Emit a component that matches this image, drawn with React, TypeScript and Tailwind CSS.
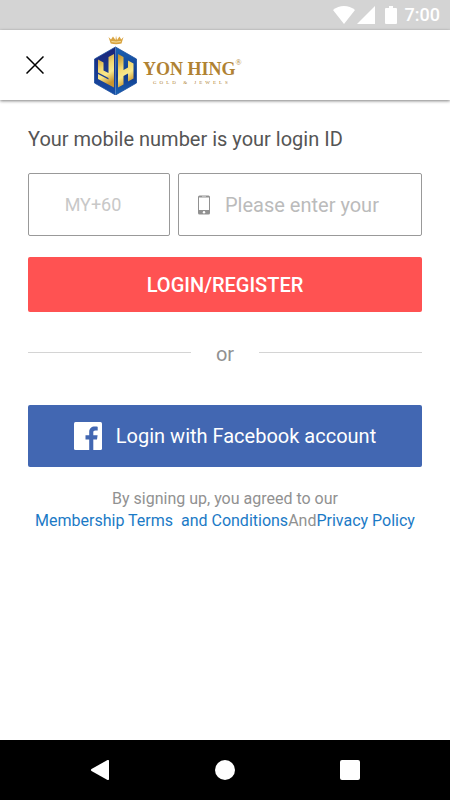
import type { ReactNode } from "react";

function StatusBar() {
  return (
    <div className="flex h-[30px] items-center justify-end bg-[#d4d4d4] pr-2.5 text-white">
      <svg className="h-[18px] w-[22px]" viewBox="0 0 22 18" fill="currentColor" aria-hidden="true">
        <path d="M0 4C6.400-1.300 15.600-1.300 22 4L11 18Z" />
      </svg>
      <svg className="ml-0.5 h-[18px] w-[18px]" viewBox="0 0 18 18" fill="currentColor" aria-hidden="true">
        <path d="M18 0V18H0Z" />
      </svg>
      <svg className="ml-2.5 h-[18px] w-3" viewBox="0 0 12 18" fill="currentColor" aria-hidden="true">
        <path d="M4 0H8V2H11Q12 2 12 3V17Q12 18 11 18H1Q0 18 0 17V3Q0 2 1 2H4Z" />
      </svg>
      <span className="ml-2 text-lg leading-[30px] font-medium">7:00</span>
    </div>
  );
}

function LogoMark() {
  return (
    <svg className="h-[60px] w-[43px]" viewBox="0 0 43 60" aria-hidden="true">
      <defs>
        <linearGradient id="gold" x1="0" y1="0" x2="0.3" y2="1">
          <stop offset="0" stopColor="#b98a2c" />
          <stop offset="0.45" stopColor="#f3d871" />
          <stop offset="0.7" stopColor="#f8e88c" />
          <stop offset="1" stopColor="#c9952f" />
        </linearGradient>
        <linearGradient id="left" x1="0" y1="0" x2="0" y2="1">
          <stop offset="0" stopColor="#1c2478" />
          <stop offset="1" stopColor="#164ea6" />
        </linearGradient>
        <linearGradient id="right" x1="0" y1="0" x2="0" y2="1">
          <stop offset="0" stopColor="#1a63b4" />
          <stop offset="0.6" stopColor="#123a8c" />
          <stop offset="1" stopColor="#1a63b4" />
        </linearGradient>
      </defs>
      <path
        d="M14.500 2L17 4.500L19 1.500L21.500 5L22 0.500L23 5L25.500 1.500L27.200 4.500L29.500 2L27.500 8.500Q22 10 16.700 8.500Z"
        fill="#d9a441"
      />
      <path d="M17.500 6.500Q22 7.600 26.800 6.500" fill="none" stroke="#f5e0a0" strokeWidth="1" />
      <path d="M21.500 12L0.500 24V48L21.500 60Z" fill="url(#left)" />
      <path d="M21.500 12L42.500 24V48L21.500 60Z" fill="url(#right)" />
      <path d="M21.500 12L42.500 24V48L21.500 60L0.500 48V24Z" fill="none" stroke="#1b4c9d" strokeWidth="0.800" />
      <path
        d="M4 24.500L9.500 27.500V35.500L14.500 38V22L20 19V52.500L4 44V39L14.500 44.500V43L4 37.500Z"
        fill="url(#gold)"
      />
      <path d="M24 19L29.500 22V35L34 32.500V25.500L39.500 28.500V43.500L34 46.500V38.500L29.500 41V49.500L24 52.500Z" fill="url(#gold)" />
    </svg>
  );
}

function Header() {
  return (
    <header className="flex h-[70px] items-center bg-white pl-[26px] shadow-[0_1px_3px_rgba(0,0,0,0.5)]">
      <button type="button" aria-label="Close" className="text-black">
        <svg className="h-[18px] w-[18px]" viewBox="0 0 18 18" fill="none" stroke="currentColor" strokeWidth="1.500">
          <path d="M0.500 0.500L17.500 17.500M17.500 0.500L0.500 17.500" />
        </svg>
      </button>
      <div className="ml-[50px] flex items-center">
        <LogoMark />
        <div className="ml-1.5 mt-4 font-['Liberation_Serif',serif] text-[#b08232]">
          <div className="flex items-start">
            <span className="text-lg leading-5 font-bold">YON HING</span>
            <span className="text-[8px] leading-2">®</span>
          </div>
          <p className="pl-2.5 text-[5px] leading-2 tracking-[3px]">GOLD &amp; JEWELS</p>
        </div>
      </div>
    </header>
  );
}

function PhoneIcon() {
  return (
    <svg className="h-5 w-3.5 shrink-0" viewBox="0 0 14 20" aria-hidden="true">
      <rect x="1" y="0.500" width="12" height="19" rx="1.500" fill="#919191" />
      <rect x="2" y="2.500" width="10" height="12.500" fill="#fff" />
      <path d="M5 1.500H9" stroke="#ddd" strokeWidth="0.600" />
      <circle cx="7" cy="17.200" r="1.200" fill="#fff" />
    </svg>
  );
}

function FacebookIcon() {
  return (
    <svg className="h-7 w-7" viewBox="0 0 28 28" aria-hidden="true">
      <rect width="28" height="28" rx="1.500" fill="#fff" />
      <path
        d="M15.200 28V17.500H11.500V13.200H15.200V10.200C15.200 6.500 17.500 4.600 20.800 4.600C22.300 4.600 23.300 4.700 23.700 4.800V8.600H21.500C19.700 8.600 19.300 9.500 19.300 10.700V13.200H23.600L23 17.500H19.300V28Z"
        fill="#4267b2"
      />
    </svg>
  );
}

function TermsLink({ children }: { children: ReactNode }) {
  return (
    <a href="#" className="whitespace-pre text-[#1b7ac6]">
      {children}
    </a>
  );
}

function NavBar() {
  return (
    <nav className="flex h-[60px] items-center justify-between bg-black px-[90px] text-white">
      <button type="button" aria-label="Back">
        <svg className="h-5 w-5" viewBox="0 0 20 20" fill="currentColor">
          <path d="M17.500 0Q19 -0.300 19 1V19Q19 20.300 17.500 20L1.500 11Q0.300 10 1.500 9Z" />
        </svg>
      </button>
      <button type="button" aria-label="Home" className="h-5 w-5 rounded-full bg-white" />
      <button type="button" aria-label="Recent apps" className="h-5 w-5 rounded-xs bg-white" />
    </nav>
  );
}

export default function App() {
  return (
    <div className="flex min-h-screen flex-col bg-white font-['Roboto',sans-serif]">
      <StatusBar />
      <Header />
      <main className="flex-1 px-7 pt-[27px]">
        <form onSubmit={(e) => e.preventDefault()}>
          <label htmlFor="mobile" className="block text-xl leading-6 text-[#555]">
            Your mobile number is your login ID
          </label>
          <div className="mt-[22px] flex gap-2">
            <input
              type="text"
              aria-label="Country code"
              placeholder="MY+60"
              className="h-[63px] w-[142px] rounded-xs border border-[#999] pr-3 text-center text-lg outline-none placeholder:text-[#c8c8c8]"
            />
            <div className="flex h-[63px] min-w-0 flex-1 items-center rounded-xs border border-[#999] pl-[18px]">
              <PhoneIcon />
              <input
                id="mobile"
                type="tel"
                placeholder="Please enter your"
                className="ml-3.5 min-w-0 flex-1 text-xl outline-none placeholder:text-[#bbb]"
              />
            </div>
          </div>
          <button
            type="submit"
            className="mt-[21px] h-[55px] w-full rounded-xs bg-[#ff5252] text-xl font-medium text-white"
          >
            LOGIN/REGISTER
          </button>
        </form>

        <div className="mt-[30px] flex items-center text-xl leading-6 text-[#919191]">
          <span className="mb-1 h-px flex-1 bg-[#d4d4d4]" />
          <span className="px-[25px]">or</span>
          <span className="mb-1 h-px flex-1 bg-[#d4d4d4]" />
        </div>

        <button
          type="button"
          className="mt-[39px] flex h-[62px] w-full items-center justify-center gap-3.5 rounded-xs bg-[#4267b2] text-xl text-white"
        >
          <FacebookIcon />
          Login with Facebook account
        </button>

        <p className="mt-[21px] text-center text-base leading-[22px] text-[#919191]">
          By signing up, you agreed to our
          <br />
          <TermsLink>{"Membership Terms  and Conditions"}</TermsLink>And<TermsLink>Privacy Policy</TermsLink>
        </p>
      </main>
      <NavBar />
    </div>
  );
}
